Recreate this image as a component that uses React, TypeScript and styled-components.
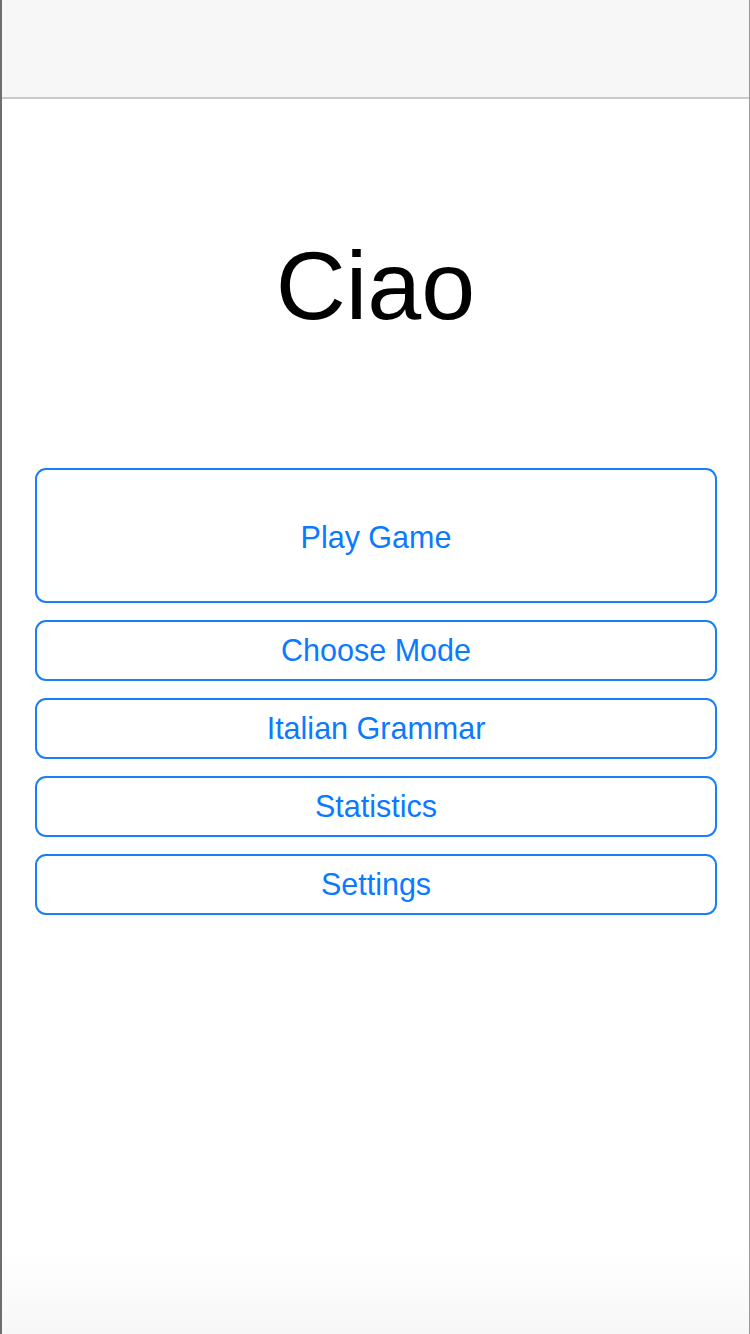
import React from "react";
import styled, { createGlobalStyle } from "styled-components";

const GlobalStyle = createGlobalStyle`
  html, body {
    margin: 0;
    padding: 0;
    background: #ffffff;
  }
  body {
    font-family: "Liberation Sans", Arial, sans-serif;
  }
`;

const Screen = styled.div`
  width: 750px;
  height: 1334px;
  box-sizing: border-box;
  display: flex;
  flex-direction: column;
  border-left: 2px solid #6e6e6e;
  border-right: 1px solid #9a9a9a;
  background: linear-gradient(to bottom, #ffffff 0, #ffffff 1250px, #f7f7f7 1334px);
`;

const NavBar = styled.div`
  height: 97px;
  flex-shrink: 0;
  background: #f7f7f7;
  border-bottom: 2px solid #c9c9c9;
`;

const Title = styled.h1`
  margin: 0;
  padding-top: 132px;
  height: 369px;
  box-sizing: border-box;
  text-align: center;
  font-weight: 400;
  font-size: 97px;
  line-height: 110px;
  color: #000000;
`;

const Menu = styled.div`
  display: flex;
  flex-direction: column;
  gap: 17px;
  padding: 0 32px 0 33px;
`;

const MenuButton = styled.button<{ $tall?: boolean }>`
  height: ${(p) => (p.$tall ? "135px" : "61px")};
  box-sizing: border-box;
  border: 2px solid #1a7ff5;
  border-radius: 11px;
  background: #ffffff;
  color: #0a7aff;
  font-family: "Liberation Sans", Arial, sans-serif;
  font-size: 30.5px;
  padding: ${(p) => (p.$tall ? "3px 0 0" : "0")};
  cursor: pointer;
`;

const items = ["Choose Mode", "Italian Grammar", "Statistics", "Settings"];

export default function App() {
  return (
    <>
      <GlobalStyle />
      <Screen>
        <NavBar />
        <Title>Ciao</Title>
        <Menu>
          <MenuButton $tall>Play Game</MenuButton>
          {items.map((label) => (
            <MenuButton key={label}>{label}</MenuButton>
          ))}
        </Menu>
      </Screen>
    </>
  );
}
